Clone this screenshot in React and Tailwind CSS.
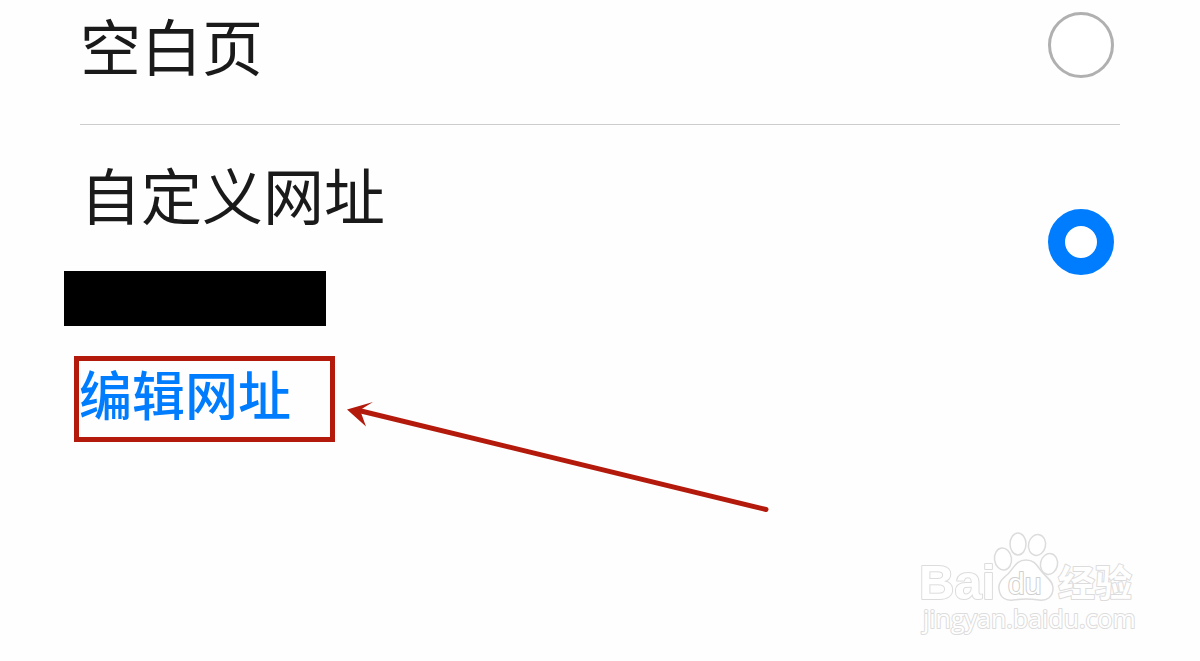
import React, { useState } from "react";

function Radio({ id, value, selected, onSelect }) {
  return (
    <input
      type="radio"
      id={id}
      name="homepage"
      value={value}
      checked={selected === value}
      onChange={() => onSelect(value)}
      className="mr-1.5 size-[66px] shrink-0 appearance-none rounded-full border-[3px] border-[#b0b0b0] bg-white checked:border-[17px] checked:border-[#007dff]"
    />
  );
}

function Arrow() {
  return (
    <svg
      className="pointer-events-none absolute top-[37px] left-[266px] h-[120px] w-[430px]"
      viewBox="0 0 430 120"
      aria-hidden="true"
    >
      <path d="M16 13 L421 111.5" stroke="#b41a0c" strokeWidth="5" strokeLinecap="round" />
      <path d="M2 11.5 L28 4 L15 12 L21 28.5 Z" fill="#b41a0c" />
    </svg>
  );
}

function Watermark() {
  return (
    <svg
      className="absolute right-10 bottom-3 h-[130px] w-[260px]"
      viewBox="0 0 260 130"
      role="img"
      aria-label="Baidu 经验"
    >
      <g fill="#fff" stroke="#dcdcdc" strokeWidth="1.5" strokeLinejoin="round">
        <ellipse cx="103" cy="40" rx="8.5" ry="11" transform="rotate(-8 103 40)" />
        <ellipse cx="118" cy="25" rx="8" ry="11" />
        <ellipse cx="137" cy="26" rx="8.5" ry="10.5" transform="rotate(12 137 26)" />
        <ellipse cx="149" cy="45" rx="8.5" ry="10.5" transform="rotate(12 149 45)" />
        <path d="M126 41 C116 41 114 49 108 55 C102 60 98 64 99 70 C100 79 106 82 113 81 C120 80 132 80 139 81 C147 82 153 78 153 69 C153 62 147 59 142 53 C137 47 135 41 126 41 Z" />
      </g>
      <g
        fill="#fff"
        stroke="#dcdcdc"
        strokeWidth="2"
        strokeLinejoin="round"
        className="[paint-order:stroke]"
      >
        <text x="19" y="80" className="font-['Liberation_Sans',sans-serif] text-[49px] font-bold">
          Bai
        </text>
        <text
          x="108"
          y="75"
          stroke="#cfcfcf"
          className="font-['Liberation_Sans',sans-serif] text-[30px]"
        >
          du
        </text>
        <text x="158" y="78" className="font-['Noto_Sans_CJK_SC',sans-serif] text-[37px] font-bold">
          经验
        </text>
        <text x="23" y="109" className="font-['Open_Sans',sans-serif] text-[25px]">
          jingyan.baidu.com
        </text>
      </g>
    </svg>
  );
}

function App() {
  const [selected, setSelected] = useState("custom");

  return (
    <main className="relative min-h-screen overflow-hidden bg-[#fefefe] px-20 font-['Noto_Sans_CJK_SC',sans-serif] text-[#1a1a1a]">
      {/* Blank page */}
      <div className="flex items-start justify-between border-b border-[#cccccc] pt-3 pb-[46px]">
        <label htmlFor="blank" className="text-[61px] leading-[66px]">
          空白页
        </label>
        <Radio id="blank" value="blank" selected={selected} onSelect={setSelected} />
      </div>

      {/* Custom URL */}
      <div className="flex items-center justify-between pt-8">
        <div className="flex flex-col items-start pt-1">
          <label htmlFor="custom" className="text-[61px] leading-[66px]">
            自定义网址
          </label>
          <div className="mt-11 -ml-4 h-[55px] w-[262px] bg-black" />
        </div>
        <Radio id="custom" value="custom" selected={selected} onSelect={setSelected} />
      </div>

      <div className="relative mt-[30px] -ml-1.5 w-[261px] border-[5px] border-[#b41a0c]">
        <a
          href="#edit"
          className="block pb-3 text-[53px] leading-[64px] font-medium text-[#007dff]"
        >
          编辑网址
        </a>
        <Arrow />
      </div>

      <Watermark />
    </main>
  );
}

export default App;
